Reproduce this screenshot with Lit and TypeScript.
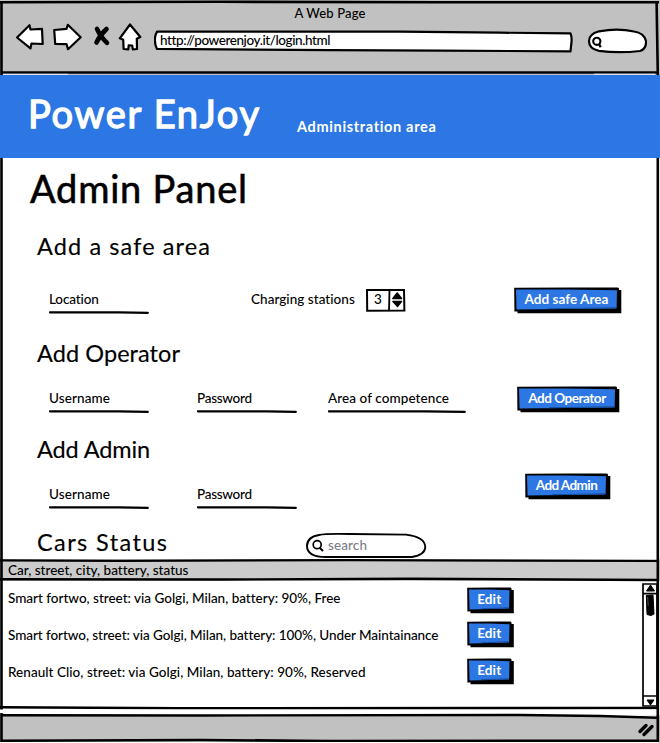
import { LitElement, html, css, svg } from "lit";
import { customElement, property, state } from "lit/decorators.js";

/** A run of text tracked so that it fills a given width. */
@customElement("fit-text")
class FitText extends LitElement {
  @property({ type: Number }) width = 0;
  @property() text = "";
  @state() tracking = 0;

  static styles = css`
    :host { display: block; white-space: pre; flex: none; }
    .t { display: inline-block; vertical-align: top; }
  `;

  firstUpdated() {
    const el = this.renderRoot.querySelector(".t") as HTMLElement;
    const natural = el.getBoundingClientRect().width;
    if (this.width) this.tracking = (this.width - natural) / (this.text.length - 1);
  }

  render() {
    return html`<span class="t" style="letter-spacing:${this.tracking}px">${this.text}</span>`;
  }
}

/** Hand-drawn push button with a hard shadow. */
@customElement("sketch-button")
class SketchButton extends LitElement {
  @property({ type: Number }) w = 100;
  @property({ type: Number }) tw = 80;
  @property() label = "";

  static styles = css`
    :host { display: block; flex: none; }
    button {
      display: grid; padding: 0; border: 0; background: none; color: #fff;
      font: 700 13.5px/20px Lato, sans-serif;
    }
    svg, .label { grid-area: 1 / 1; }
    .label { z-index: 1; justify-self: center; margin: 2px 3px 0 0; }
  `;

  render() {
    const w = this.w;
    return html`<button>
      <svg width=${w + 3} height="27" viewBox="0 0 ${w + 3} 27">
        <path d="M3.5,8 V26.3 H${w + 2.3} V3 H${w - 4} Z" fill="#000" />
        <path d="M0.2,0.8 L${w * 0.55},0.4 L${w - 1},0.6 L${w},1.5 L${w - 0.3},23 L${w * 0.6},24.2 L0.4,24.4 Z" fill="#000" />
        <path d="M2,2.6 L${w * 0.5},2.5 L${w - 2},3.2 L${w - 2.4},21.6 L${w * 0.5},22 L2.5,22.4 Z" fill="#2c77e3" />
        <path d="M${w * 0.32},21.7 L${w * 0.65},21.3 L${w - 3},20.7" stroke="#174f9d" stroke-width="1" fill="none" />
      </svg>
      <fit-text class="label" .width=${this.tw} .text=${this.label}></fit-text>
    </button>`;
  }
}

/** Label with a hand-drawn rule beneath it. */
@customElement("line-field")
class LineField extends LitElement {
  @property({ type: Number }) w = 100;
  @property({ type: Number }) tw = 60;
  @property() label = "";

  static styles = css`
    :host { display: block; flex: none; }
    svg { display: block; margin-top: 1px; }
  `;

  render() {
    const w = this.w;
    return html`<fit-text .width=${this.tw} .text=${this.label}></fit-text>
      <svg width=${w} height="5" viewBox="0 0 ${w} 5">
        <path d="M1,2.3 L${w * 0.7},2.4 L${w - 1.2},2.8" stroke="#000" stroke-width="2.3" stroke-linecap="round" fill="none" />
      </svg>`;
  }
}

@customElement("app-root")
class AppRoot extends LitElement {
  static styles = css`
    :host {
      display: flex; flex-direction: column; position: relative;
      width: 660px; height: 743px; overflow: hidden; background: #fff; color: #000;
      font: 500 13.5px/20px Lato, sans-serif;
    }
    svg { display: block; flex: none; }
    .frame { position: absolute; inset: 0; pointer-events: none; }
    .chrome { height: 75px; flex: none; background: #c1c1c1; display: flex; flex-direction: column; }
    .page-title { align-self: center; margin-top: 3px; font-size: 13px; }
    .toolbar { display: flex; align-items: flex-start; padding-left: 14px; }
    .address { display: grid; margin: 6px 0 0 10px; }
    .address > * { grid-area: 1 / 1; }
    .address fit-text { margin-left: 6px; margin-top: 1px; }
    .finder { margin: 4px 0 0 12px; }
    .banner {
      height: 83px; flex: none; background: #2c77e3; color: #fff; display: flex;
      align-items: flex-start; z-index: 1;
    }
    .brand {
      font: 400 38px/44px Lato, sans-serif; margin: 16px 0 0 28px; width: 269px;
      -webkit-text-stroke: 1.3px #fff;
    }
    .subtitle { font: 700 14.5px/20px Lato, sans-serif; margin-top: 42px; }
    .body { height: 401px; flex: none; display: flex; flex-direction: column; }
    .title { font: 400 38px/44px Lato, sans-serif; margin: 8px 0 22px 30px; -webkit-text-stroke: .6px #000; }
    .section { margin-left: 37px; }
    .heading { font: 400 23.5px/28px Lato, sans-serif; -webkit-text-stroke: .15px #000; }
    .row { display: flex; align-items: flex-start; padding-left: 12px; }
    .safe { height: 107px; } .safe .row { margin-top: 29px; }
    .operator { height: 96px; } .operator .row { margin-top: 21px; }
    .admin { height: 93px; } .admin .row { margin-top: 21px; }
    .cars { display: flex; height: 31px; }
    .stations { margin-left: 102px; width: 115px; }
    .stepper { display: grid; }
    .stepper > * { grid-area: 1 / 1; }
    .stepper .value { margin-left: 8px; }
    .push-safe { margin: -2px 0 0 108px; }
    .second { margin-left: 48px; }
    .third { margin-left: 31px; }
    .push-operator { margin: -2px 0 0 51px; }
    .push-admin { margin: -11px 0 0 228px; }
    .search { display: grid; margin-left: 139px; margin-top: 4px; }
    .search > * { grid-area: 1 / 1; }
    .search fit-text { margin: 3px 0 0 22px; color: #7d7d86; }
    .cars .heading { width: 130px; }
    .table-head { height: 22px; flex: none; background: #cbcbcb; padding-left: 8px; }
    .table-head fit-text { padding-top: 1px; }
    .table { height: 127px; flex: none; display: flex; justify-content: space-between; }
    .rows { padding: 7px 0 0 8px; }
    .car { height: 37px; display: flex; }
    .car fit-text { width: 459px; flex: none; }
    .car .b0 { margin-top: -1px; }
    .car .b1, .car .b2 { margin-top: -4px; }
    .scroll { margin: 2px 2px 0 0; }
    .status { margin-top: 7px; height: 28px; background: #c1c1c1; display: flex; justify-content: flex-end; }
    .grip { margin: 6px 5px 0 0; }
  `;

  cars: [string, number][] = [
    ["Smart fortwo, street: via Golgi, Milan, battery: 90%, Free", 332],
    ["Smart fortwo, street: via Golgi, Milan, battery: 100%, Under Maintainance", 430],
    ["Renault Clio, street: via Golgi, Milan, battery: 90%, Reserved", 357],
  ];

  frame() {
    return svg`
      <path d="M1.5 3V743M0 2.2 220 1.8 440 2.3 659 2.2" fill="none" stroke="#000" stroke-width="2.6" />
      <path d="M656.6 2 657.8 75V743" fill="none" stroke="#000" stroke-width="2.6" />
      <path d="M2 72.5H658" stroke="#000" stroke-width="2.3" />
      <path d="M3 74.3H68M594 74.2H655" stroke="#eee" stroke-width="1" />
      <path d="M0 560.3 118 560.8 350 560.2 657 561" fill="none" stroke="#000" stroke-width="2.2" />
      <path d="M0 579.2 220 579.5 410 578.8 657 580" fill="none" stroke="#000" stroke-width="2.4" />
      <path d="M0 707.3 180 708.3 657 708" fill="none" stroke="#000" stroke-width="2.6" />
      <path d="M0 711.3H656" stroke="#fff" stroke-width="3.6" />
      <path d="M540 714 600 714 656 715.5V717" fill="#fff" />
      <path d="M2 715.2 200 715.5 520 715 600 716 657 717.7" fill="none" stroke="#000" stroke-width="2.4" />
      <path d="M2 740.7 200 740 330 741 657 740.8" fill="none" stroke="#000" stroke-width="2.6" />
      <path d="M0 742.5H659" stroke="#fff" stroke-width="1" />`;
  }

  render() {
    return html`
      <header class="chrome">
        <fit-text class="page-title" .width=${71} text="A Web Page"></fit-text>
        <div class="toolbar">
          <svg width="130" height="30" viewBox="14 23 130 30" fill="#fff" stroke="#000" stroke-width="2.2" stroke-linejoin="round">
            <path d="M17 37.5 29.5 25.2 30.5 29.5 42 28.9 42.7 44 31.5 43.5 30.5 48.3Z" />
            <path d="M54.2 30 66.5 28.8 67.8 24.8 80.7 37.2 68 49.2 66.6 44.2 55.2 44Z" />
            <path d="M97 28.8Q100 36 107 42.8M106.5 29Q100 35 96.5 42.5" fill="none" stroke-width="4.6" stroke-linecap="round" />
            <path d="M130 24.5 140.3 37 136.8 38.8 137 49 132.8 49.3 132.2 45.5 128.7 45.4 128.3 49.3 123.6 49 123.2 39.8 119.8 38.3Z" />
          </svg>
          <div class="address">
            <svg width="421" height="24" viewBox="154 29 421 24">
              <path d="M157 31.7 250 31.6 400 31.6 500 32.7 570.5 33.3Q572 37 571.5 42L570.5 51.3 440 50.7 330 50.2 157 48.9Q153.8 43 155.5 35Z" fill="#fff" stroke="#000" stroke-width="2.2" stroke-linejoin="round" />
            </svg>
            <fit-text .width=${170} text="http://powerenjoy.it/login.html"></fit-text>
          </div>
          <svg class="finder" width="60" height="27" viewBox="587 27 60 27">
            <path d="M589 41Q589 34 599 31.3Q618 28 634 31.5Q644 33 646 41Q646.5 49 640 51Q618 53.5 599 50.8Q589 49 589 41Z" fill="#fff" stroke="#000" stroke-width="2.2" />
            <circle cx="596.8" cy="41.3" r="3.6" fill="none" stroke="#000" stroke-width="2.1" />
            <path d="M599 44 600.7 47.3" fill="none" stroke="#000" stroke-width="2.3" />
          </svg>
        </div>
      </header>

      <div class="banner">
        <fit-text class="brand" .width=${231} text="Power EnJoy"></fit-text>
        <fit-text class="subtitle" .width=${139} text="Administration area"></fit-text>
      </div>

      <main class="body">
        <fit-text class="title" .width=${217} text="Admin Panel"></fit-text>
        <section class="section safe">
          <fit-text class="heading" .width=${173} text="Add a safe area"></fit-text>
          <div class="row">
            <line-field label="Location" .tw=${50}></line-field>
            <fit-text class="stations" .width=${104} text="Charging stations"></fit-text>
            <div class="stepper">
              <svg width="40" height="24" viewBox="366 289 40 24">
                <path d="M367 290 404 289.8 404.4 310.6 367.2 310.8Z" fill="#fff" stroke="#000" stroke-width="2" />
                <path d="M389.5 290 389 311" stroke="#000" stroke-width="1.8" />
                <path d="M397.2 293 392.8 298.5H401.6ZM392.8 301.4H401.6L397.5 306.6Z" fill="#000" stroke="#000" stroke-width="1.4" stroke-linejoin="round" />
              </svg>
              <span class="value">3</span>
            </div>
            <sketch-button class="push-safe" .w=${105} .tw=${84} label="Add safe Area"></sketch-button>
          </div>
        </section>
        <section class="section operator">
          <fit-text class="heading" .width=${143} text="Add Operator"></fit-text>
          <div class="row">
            <line-field label="Username" .tw=${61}></line-field>
            <line-field class="second" label="Password" .tw=${55}></line-field>
            <line-field class="third" label="Area of competence" .tw=${121} .w=${138}></line-field>
            <sketch-button class="push-operator" .w=${100} .tw=${78} label="Add Operator"></sketch-button>
          </div>
        </section>
        <section class="section admin">
          <fit-text class="heading" .width=${113} text="Add Admin"></fit-text>
          <div class="row">
            <line-field label="Username" .tw=${61}></line-field>
            <line-field class="second" label="Password" .tw=${55}></line-field>
            <sketch-button class="push-admin" .w=${83} .tw=${62} label="Add Admin"></sketch-button>
          </div>
        </section>
        <section class="section cars">
          <fit-text class="heading" .width=${130} text="Cars Status"></fit-text>
          <div class="search">
            <svg width="121" height="27" viewBox="306 532 121 27">
              <path d="M307 546Q307 537 319 535Q325 533.5 350 534L406 534.6Q425 537 425.3 547Q425 555 412 557L326 557Q307 557 307 546Z" fill="#fff" stroke="#000" stroke-width="1.9" />
              <circle cx="317.2" cy="544.7" r="4" fill="none" stroke="#000" stroke-width="1.7" />
              <path d="M320 548 323 551" stroke="#000" stroke-width="2" />
            </svg>
            <fit-text .width=${39} text="search"></fit-text>
          </div>
        </section>
      </main>

      <div class="table-head">
        <fit-text .width=${180} text="Car, street, city, battery, status"></fit-text>
      </div>
      <div class="table">
        <div class="rows">
          ${this.cars.map(([text, width], i) => html`
            <div class="car">
              <fit-text .width=${width} .text=${text}></fit-text>
              <sketch-button class="b${i}" .w=${44.5} .tw=${24} label="Edit"></sketch-button>
            </div>`)}
        </div>
        <svg class="scroll" width="16" height="124" viewBox="642 583 16 124">
          <path d="M643 584V706H657V584ZM643 593.7H657M643 696H657" fill="none" stroke="#000" stroke-width="1.7" />
          <path d="M650.5 585 646.5 591H654.5ZM647 700H654L650.5 705Z" fill="#000" stroke="#000" stroke-width="1" />
          <path d="M646.3 595.5 653 595 654 614 651 615.5 647 614.5Z" fill="#000" stroke="#000" stroke-width="1" stroke-linejoin="round" />
          <path d="M647.7 597 648.2 606" stroke="#777" stroke-width=".7" />
        </svg>
      </div>
      <footer class="status">
        <svg class="grip" width="18" height="18" viewBox="637 722 18 18" stroke="#000" stroke-width="3.4" stroke-linecap="round">
          <path d="M640 732.5 646 726.5M644 735.5 652 727.5" />
        </svg>
      </footer>
      <svg class="frame" width="660" height="743" viewBox="0 0 660 743">${this.frame()}</svg>
    `;
  }
}
